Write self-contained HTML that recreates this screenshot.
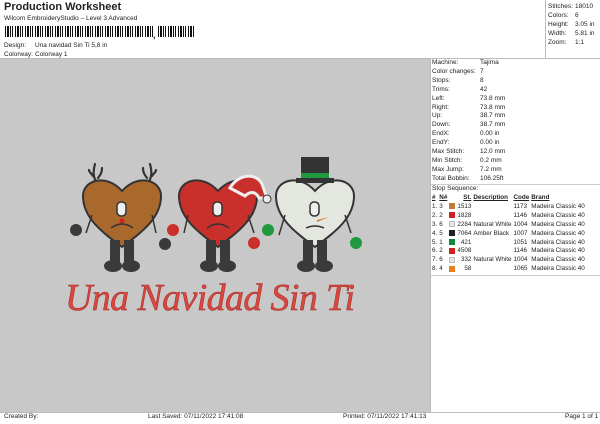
<!DOCTYPE html>
<html><head><style>
*{margin:0;padding:0;box-sizing:border-box}
body{width:600px;height:424px;background:#fff;font-family:"Liberation Sans",sans-serif;font-size:7px;color:#222;position:relative;overflow:hidden}
.a{position:absolute;white-space:nowrap}
.canvas{position:absolute;left:0;top:59px;width:430px;height:353px;background:#c8c8c8}
.bc{position:absolute;top:26px;height:11px;background:repeating-linear-gradient(90deg,#111 0 1px,#fff 1px 2px,#111 2px 4px,#fff 4px 5px,#111 5px 6px,#fff 6px 7px,#111 7px 8px,#fff 8px 10px)}
table{border-collapse:collapse;font-size:6.3px}
td{padding:0 1px;line-height:8.9px;white-space:nowrap}
.sw{display:inline-block;width:6px;height:6px;vertical-align:middle}
</style></head><body>
<div class="a" style="left:4px;top:1px;font-size:11px;font-weight:bold">Production Worksheet</div>
<div class="a" style="left:4px;top:15px;font-size:6.5px">Wilcom EmbroideryStudio – Level 3 Advanced</div>
<div class="bc" style="left:5px;width:148px"></div>
<div class="a" style="left:153px;top:30px;font-size:9px;font-weight:bold">,</div>
<div class="bc" style="left:158px;width:36px"></div>
<div class="a" style="left:4px;top:42px;font-size:6.5px">Design:</div>
<div class="a" style="left:35px;top:42px;font-size:6.5px">Una navidad Sin Ti 5,8 in</div>
<div class="a" style="left:4px;top:51px;font-size:6.5px">Colorway:</div>
<div class="a" style="left:35px;top:51px;font-size:6.5px">Colorway 1</div>
<div style="position:absolute;left:0;top:58px;width:600px;border-top:1px solid #bbb"></div>
<div style="position:absolute;left:545px;top:0;height:58px;border-left:1px solid #bbb"></div>
<div class="a" style="left:548px;top:2px;font-size:6.5px;line-height:9px">Stitches:<br>Colors:<br>Height:<br>Width:<br>Zoom:</div>
<div class="a" style="left:575px;top:2px;font-size:6.5px;line-height:9px">18010<br>6<br>3.05 in<br>5.81 in<br>1:1</div>
<div class="canvas">
<svg width="430" height="353" viewBox="0 59 430 353">
<g stroke="#333" stroke-width="2.2" fill="none" stroke-linecap="round">
<path d="M100 188 c-6 -8 -8 -14 -5 -24 M98 178 c3 -4 4 -6 4 -10 M93 176 c-2 -3 -4 -4 -4 -6 M145 188 c6-8 8-14 5-24 M147 178 c-3-4-4-6-4-10 M152 176 c2-3 4-4 4-6"/>
</g>
<path d="M122 247 C102 232 83 218 83 196 C83 180 106 173 122 191 C138 173 161 180 161 196 C161 218 142 232 122 247Z" fill="#a9692d" stroke="#333" stroke-width="2"/>
<path d="M218 247 C198 232 179 218 179 196 C179 180 202 173 218 191 C234 173 257 180 257 196 C257 218 238 232 218 247Z" fill="#c9302c" stroke="#333" stroke-width="2"/>
<path d="M230 188 c8 -14 26 -16 32 -4 l5 14 -8 0 c-4 -8 -10 -6 -14 -2z" fill="#c9302c" stroke="#eee" stroke-width="3"/>
<circle cx="267" cy="199" r="4" fill="#eee" stroke="#333"/>
<path d="M315 247 C295 232 276 218 276 196 C276 180 299 173 315 191 C331 173 354 180 354 196 C354 218 335 232 315 247Z" fill="#e4e6e0" stroke="#333" stroke-width="2"/>
<rect x="301" y="157" width="28" height="22" fill="#333"/><rect x="296" y="178" width="38" height="5" fill="#333"/><rect x="301" y="173" width="28" height="5" fill="#1e9a3c"/>
<path d="M317 220 l12 -3 -12 5z" fill="#e07a1e"/>
<g fill="#eee" stroke="#333" stroke-width="1.5"><rect x="117" y="202" width="9" height="14" rx="4"/><rect x="213" y="202" width="9" height="14" rx="4"/><rect x="310" y="202" width="9" height="14" rx="4"/></g>
<circle cx="122" cy="221" r="2.5" fill="#d02020"/>
<g stroke="#333" stroke-width="1.5" fill="none"><path d="M111 228 q11-8 22 0M207 228 q11-8 22 0M306 228 q9-4 18 0"/>
<path d="M92 215 l-6 18M152 215 l4 18M188 215 l-4 18M248 215 l6 18M285 215 l-6 20M345 215 l6 18"/></g>
<g fill="#3a3a3a"><rect x="110" y="240" width="10" height="25"/><rect x="124" y="240" width="10" height="25"/><ellipse cx="113" cy="266" rx="9" ry="6"/><ellipse cx="131" cy="266" rx="9" ry="6"/>
<rect x="206" y="240" width="10" height="25"/><rect x="220" y="240" width="10" height="25"/><ellipse cx="209" cy="266" rx="9" ry="6"/><ellipse cx="227" cy="266" rx="9" ry="6"/>
<rect x="303" y="240" width="10" height="25"/><rect x="317" y="240" width="10" height="25"/><ellipse cx="306" cy="266" rx="9" ry="6"/><ellipse cx="324" cy="266" rx="9" ry="6"/>
<circle cx="76" cy="230" r="6"/><circle cx="165" cy="244" r="6"/></g>
<g fill="#c9302c"><circle cx="173" cy="230" r="6"/><circle cx="254" cy="243" r="6"/></g>
<g fill="#1e9a3c"><circle cx="268" cy="230" r="6"/><circle cx="356" cy="243" r="6"/></g>
<text x="210" y="310" text-anchor="middle" font-family="Liberation Serif,serif" font-style="italic" font-size="38" fill="#d8483f" stroke="#a02a25" stroke-width="0.5" textLength="290">Una Navidad Sin Ti</text>
</svg>
</div>
<div style="position:absolute;left:430px;top:59px;width:170px;height:353px;background:#fff;border-left:1px solid #bbb"></div>
<div class="a" style="left:432px;top:59px;font-size:6.5px;line-height:8.9px">Machine:<br>Color changes:<br>Stops:<br>Trims:<br>Left:<br>Right:<br>Up:<br>Down:<br>EndX:<br>EndY:<br>Max Stitch:<br>Min Stitch:<br>Max Jump:<br>Total Bobbin:</div>
<div class="a" style="left:480px;top:59px;font-size:6.5px;line-height:8.9px">Tajima<br>7<br>8<br>42<br>73.8 mm<br>73.8 mm<br>38.7 mm<br>38.7 mm<br>0.00 in<br>0.00 in<br>12.0 mm<br>0.2 mm<br>7.2 mm<br>106.25ft</div>
<div style="position:absolute;left:431px;top:184px;width:169px;border-top:1px solid #ccc"></div>
<div class="a" style="left:432px;top:185px;font-size:6.5px">Stop Sequence:</div>
<table class="a" style="left:431px;top:194px">
<tr style="font-weight:bold;text-decoration:underline"><td>#</td><td>N#</td><td></td><td style="text-align:right">St.</td><td>Description</td><td>Code</td><td>Brand</td></tr>
<tr><td>1.</td><td>3</td><td><span class="sw" style="background:#c07a3a"></span></td><td align=right>1513</td><td></td><td>1173</td><td>Madeira Classic 40</td></tr>
<tr><td>2.</td><td>2</td><td><span class="sw" style="background:#d02020"></span></td><td align=right>1828</td><td></td><td>1146</td><td>Madeira Classic 40</td></tr>
<tr><td>3.</td><td>6</td><td><span class="sw" style="background:#e8e8ea;border:1px solid #bbb"></span></td><td align=right>2284</td><td>Natural White</td><td>1004</td><td>Madeira Classic 40</td></tr>
<tr><td>4.</td><td>5</td><td><span class="sw" style="background:#222"></span></td><td align=right>7064</td><td>Amber Black</td><td>1007</td><td>Madeira Classic 40</td></tr>
<tr><td>5.</td><td>1</td><td><span class="sw" style="background:#0a8a3a"></span></td><td align=right>421</td><td></td><td>1051</td><td>Madeira Classic 40</td></tr>
<tr><td>6.</td><td>2</td><td><span class="sw" style="background:#d02020"></span></td><td align=right>4508</td><td></td><td>1146</td><td>Madeira Classic 40</td></tr>
<tr><td>7.</td><td>6</td><td><span class="sw" style="background:#e8e8ea;border:1px solid #bbb"></span></td><td align=right>332</td><td>Natural White</td><td>1004</td><td>Madeira Classic 40</td></tr>
<tr><td>8.</td><td>4</td><td><span class="sw" style="background:#e8801e"></span></td><td align=right>58</td><td></td><td>1065</td><td>Madeira Classic 40</td></tr>
</table>
<div style="position:absolute;left:431px;top:275px;width:169px;border-top:1px solid #ccc"></div>
<div style="position:absolute;left:0;top:412px;width:600px;height:12px;border-top:1px solid #bbb;background:#fff"></div>
<div class="a" style="left:4px;top:413px;font-size:6.5px">Created By:</div>
<div class="a" style="left:148px;top:413px;font-size:6.5px">Last Saved: 07/11/2022 17:41:08</div>
<div class="a" style="left:343px;top:413px;font-size:6.5px">Printed: 07/11/2022 17:41:13</div>
<div class="a" style="left:565px;top:413px;font-size:6.5px">Page 1 of 1</div>
</body></html>
